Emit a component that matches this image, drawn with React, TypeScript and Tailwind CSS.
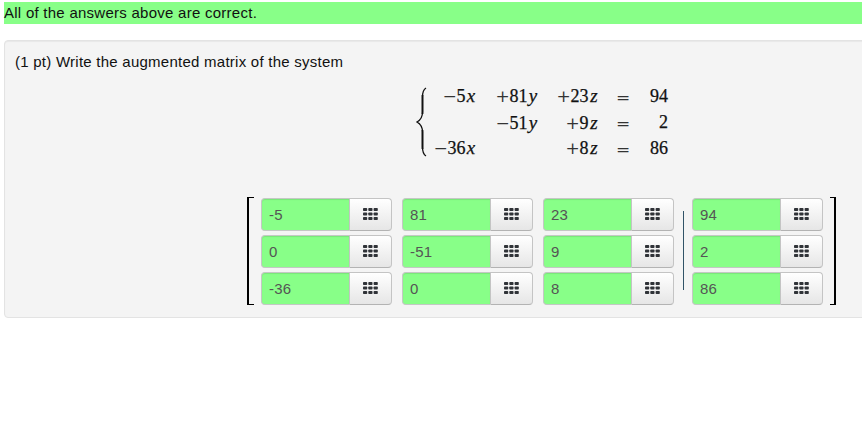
import type { ReactNode } from "react";

const matrix = [
  ["-5", "81", "23", "94"],
  ["0", "-51", "9", "2"],
  ["-36", "0", "8", "86"],
];

function Keypad() {
  return (
    <svg width="15" height="12" viewBox="0 0 15 12" fill="#303338" className="-mt-px">
      {[0, 4.5, 9].map((y) =>
        [0, 5.3, 10.6].map((x) => <rect key={`${x}-${y}`} x={x} y={y} width="4.2" height="3" rx="0.8" />),
      )}
    </svg>
  );
}

function Entry({ value }: { value: string }) {
  return (
    <div className="flex h-[33px] w-[131px]">
      <div className="flex w-[88px] items-center rounded-l-[4px] border border-r-0 border-[#c4c8c4] bg-[#88ff88] pl-[7px] pt-px text-[15px] tracking-[0.15px] text-[#555555] shadow-[inset_0_1px_1px_rgba(0,0,0,0.1)]">
        {value}
      </div>
      <button className="flex w-[43px] items-center justify-center rounded-r-[4px] border border-[#c4c4c4] border-b-[#b3b3b3] bg-linear-to-b from-white to-[#e6e6e6] pr-px">
        <Keypad />
      </button>
    </div>
  );
}

function Column({ index }: { index: number }) {
  return (
    <div className="flex flex-col gap-1">
      {matrix.map((row, i) => (
        <Entry key={i} value={row[index]} />
      ))}
    </div>
  );
}

function Sign({ children }: { children: ReactNode }) {
  return <span className="inline-block w-[14px] text-center font-['DejaVu_Serif',serif] text-[17px] leading-none text-[#333333] [-webkit-text-stroke:0px]">{children}</span>;
}

function Term({ sign, n, v }: { sign: string; n: string; v: string }) {
  return (
    <span className="whitespace-nowrap">
      <Sign>{sign}</Sign>
      {n}
      <i className="ml-[0.5px] inline-block w-[10px] text-center text-[19px] leading-none">{v}</i>
    </span>
  );
}

const equations = [
  { x: "5", y: ["+", "81"], z: "23", r: "94", h: "h-[27px]" },
  { x: "", y: ["−", "51"], z: "9", r: "2", h: "h-[26px]" },
  { x: "36", y: null, z: "8", r: "86", h: "h-[25px]" },
];

export default function App() {
  return (
    <main className="h-[427px] w-full overflow-hidden bg-white pl-1 pt-[2px] font-['Liberation_Sans',Arial,sans-serif] text-[15px] text-[#111111]">
      <div className="h-[22px] bg-[#88ff88] leading-[22px] tracking-[0.26px]">All of the answers above are correct.</div>
      <section className="mt-4 -mr-2 h-[278px] rounded-[4px] border border-[#e3e3e3] bg-[#f4f4f4] shadow-[inset_0_1px_1px_rgba(0,0,0,0.05)]">
        <p className="ml-[10px] pt-[11px] leading-5 tracking-[0.25px]">(1 pt) Write the augmented matrix of the system</p>
        <div className="ml-[411px] mt-[15px] flex h-[72px] font-['Liberation_Serif',serif] text-[18px] text-[#111111] [-webkit-text-stroke:0.25px_#111]">
          <svg width="11" height="70" viewBox="0 0 11 70" fill="none" stroke="#111" className="shrink-0">
            <path d="M10 1Q6.5 3 6.5 10V25Q6.5 32 1 35Q6.5 38 6.5 45V60Q6.5 67 10 69" strokeWidth="1.3" />
            <path d="M6.5 8V27M6.5 43V62" strokeWidth="1.8" />
          </svg>
          <div className="-mt-[5px]">
            {equations.map((e, i) => (
              <div key={i} className={`grid grid-cols-[49px_62px_61px_32px_37px] items-center justify-items-end leading-none ${e.h}`}>
                <span>{e.x && <Term sign="−" n={e.x} v="x" />}</span>
                <span>{e.y && <Term sign={e.y[0]} n={e.y[1]} v="y" />}</span>
                <Term sign="+" n={e.z} v="z" />
                <span className="pr-px pt-[2px]"><Sign>=</Sign></span>
                <span>{e.r}</span>
              </div>
            ))}
          </div>
        </div>
        <div className="ml-[242px] mt-[38px] flex">
          <div className="h-[108px] w-[7px] border-2 border-r-0 border-y-[1.5px] border-black" />
          <div className="ml-[7px] mt-px flex gap-[10px]">
            <Column index={0} />
            <Column index={1} />
            <Column index={2} />
          </div>
          <div className="ml-[9px] mt-[14px] h-[79px] w-px bg-[#315367]" />
          <div className="ml-[8px] mt-px">
            <Column index={3} />
          </div>
          <div className="ml-[7px] h-[108px] w-[6px] border-2 border-l-0 border-y-[1.5px] border-black" />
        </div>
      </section>
    </main>
  );
}
